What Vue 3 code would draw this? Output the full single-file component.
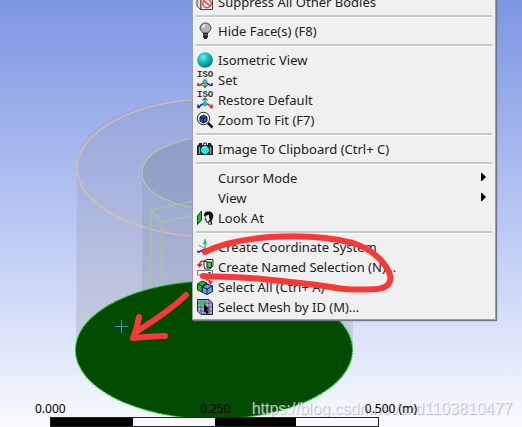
<template>
  <main class="viewport">
    <svg class="model" width="522" height="427" viewBox="0 0 522 427" aria-hidden="true">
      <defs>
        <linearGradient id="side" x1="0" y1="0" x2="0" y2="1">
          <stop offset="0" stop-color="#9298bc" stop-opacity="0.25" />
          <stop offset="1" stop-color="#9b9ba8" stop-opacity="0.35" />
        </linearGradient>
      </defs>
      <!-- outer and inner cylinders -->
      <path d="M77 167C77 126 130 99 214 99C298 99 353 126 353 167V350H76Z" fill="url(#side)" />
      <path d="M142 172C142 156 162 144 194 139V300H142Z" fill="#7d86a3" fill-opacity="0.22" />
      <path d="M142 172C142 190 162 203 194 208V139C162 144 142 156 142 172Z" fill="#78839f" fill-opacity="0.2" />
      <ellipse cx="215" cy="168" rx="138" ry="69" fill="none" stroke="#e3bd9e" stroke-width="1.2" />
      <ellipse cx="215" cy="173" rx="73" ry="36" fill="none" stroke="#a9cfa9" stroke-width="1.2" />
      <path d="M151 290V210L194 201M151 210L162 222L194 215M162 222L161 290" fill="none" stroke="#a5c99a" stroke-width="1.2" />
      <!-- selected bottom face -->
      <ellipse cx="214" cy="350" rx="138.500" ry="69" fill="#004b00" stroke="#18c818" stroke-width="1.2" stroke-dasharray="2 1" />
      <path d="M115 326.500H128M121.500 320V333" stroke="#5a87b8" stroke-width="1" />
    </svg>

    <p class="watermark">https://blog.csdn.net/sxd1103810477</p>
    <div class="scale">
      <div class="labels">
        <span>0.000</span>
        <span>0.250</span>
        <span>0.500 (m)</span>
      </div>
      <div class="ruler"><i></i><i></i><i></i><i></i></div>
    </div>

    <menu class="context">
      <template v-for="(group, g) in groups" :key="g">
        <li v-if="g" class="separator" role="separator"></li>
        <li v-for="item in group" :key="item.label">
          <button type="button" class="item">
            <svg class="icon" viewBox="0 0 16 16" aria-hidden="true" v-html="icons[item.icon]"></svg>
            <span>{{ item.label }}</span>
            <svg v-if="item.sub" class="arrow" viewBox="0 0 5 8" aria-hidden="true"><path d="M0 0H1L5 4L1 8H0Z" /></svg>
          </button>
        </li>
      </template>
    </menu>

    <!-- red pen marks -->
    <svg class="marks" width="522" height="427" viewBox="0 0 522 427" aria-hidden="true">
      <path d="M205 252C222 243 246 239 270 237C302 235 330 237 353 243C371 249 383 260 389 272C393 282 388 288 377 289C362 290 345 290 331 287C305 283 284 281 262 279C240 277 220 277 203 276" />
      <path d="M186 295C173 308 155 320 136 332M139 317C138 324 136 331 133 338C144 337 154 336 165 336" />
    </svg>
  </main>
</template>

<script setup>
const groups = [
  [{ label: "Suppress All Other Bodies", icon: "suppress" }],
  [{ label: "Hide Face(s) (F8)", icon: "bulb" }],
  [
    { label: "Isometric View", icon: "ball" },
    { label: "Set", icon: "isoSet" },
    { label: "Restore Default", icon: "isoRestore" },
    { label: "Zoom To Fit (F7)", icon: "zoom" },
  ],
  [{ label: "Image To Clipboard (Ctrl+ C)", icon: "camera" }],
  [
    { label: "Cursor Mode", sub: true },
    { label: "View", sub: true },
    { label: "Look At", icon: "look" },
  ],
  [
    { label: "Create Coordinate System", icon: "axes" },
    { label: "Create Named Selection (N)...", icon: "named" },
    { label: "Select All (Ctrl+ A)", icon: "cubes" },
    { label: "Select Mesh by ID (M)...", icon: "mesh" },
  ],
];

// lettering above the axis glyphs
const isoCap = '<text x="0" y="5" font-family="Liberation Mono, monospace" font-size="9" font-weight="bold" fill="#333">ISO</text>';

const icons = {
  suppress: '<path d="M0 0L4 3V16L0 12Z" fill="#ddd" stroke="#444"/><path d="M4 3H15.500V15.500H4Z" fill="#eee" stroke="#444"/><circle cx="10" cy="9.500" r="4.200" fill="#f3dada" stroke="#c55" stroke-width="1.400"/><path d="M7 7L13 12" stroke="#c55" stroke-width="1.500"/>',
  bulb: '<path d="M6 10C5.500 8.500 3 7.500 3 5A5.500 5 0 0 1 14 5C14 7.500 11.500 8.500 11 10Z" fill="#b4b4b4" stroke="#444"/><path d="M6 5C6 3 7 2 8.500 2" fill="none" stroke="#eee" stroke-width="1.500"/><path d="M6 10H11V14L9.500 16H7.500L6 14Z" fill="#222"/><path d="M6 12H11" stroke="#777"/>',
  ball: '<defs><radialGradient id="b" cx=".38" cy=".32" r=".7"><stop offset="0" stop-color="#6ff0ee"/><stop offset=".4" stop-color="#22c4c4"/><stop offset="1" stop-color="#077"/></radialGradient></defs><circle cx="8" cy="8" r="7.800" fill="url(#b)"/>',
  isoSet: isoCap + '<path d="M8 10L5 12L2 13.500M1 11V14" fill="none" stroke="#c22" stroke-width="1.600"/><path d="M8 10L11 12L14 13.500M15 11V14" fill="none" stroke="#22b" stroke-width="1.600"/><path d="M8 9V15M5.500 13L8 15.500L10.500 13" fill="none" stroke="#282" stroke-width="1.200"/><circle cx="8" cy="9.500" r="2.400" fill="#2ab5b5"/>',
  isoRestore: isoCap + '<path d="M8 11L4 13L2 15M1 12.500V15.500H3" fill="none" stroke="#22c" stroke-width="1.600"/><path d="M8 11L12 13L14 15M15 12.500V15.500H13" fill="none" stroke="#d22" stroke-width="1.600"/><path d="M8 12V6M5.500 8.500L8 6L10.500 8.500" fill="none" stroke="#282" stroke-width="1.200"/><circle cx="8" cy="12" r="2.400" fill="#2ab5b5"/>',
  zoom: '<circle cx="6.500" cy="6.500" r="6.200" fill="#f4f4fa" stroke="#222"/><path d="M3 5L6.500 3L10 5V9L6.500 11L3 9Z" fill="#2c56b8" stroke="#013"/><path d="M3 5L6.500 6.500L10 5M6.500 6.500V10.500" fill="none" stroke="#013"/><path d="M11 11L15.500 15.500" stroke="#111" stroke-width="2.500"/>',
  camera: '<path d="M0 5L2 3V2H5V4H11V2H14V3L16 5V14H0Z" fill="#222"/><path d="M2.500 6V13M13.500 6V13" stroke="#999" stroke-width="1.500"/><path d="M6 4L7 2H9L10 4" fill="#ddd" stroke="#222"/><circle cx="8" cy="9" r="4.500" fill="#2ee6e6" stroke="#044"/><path d="M6 8Q7 6 9 6" stroke="#cff" fill="none"/>',
  look: '<path d="M.5 6L4.500 1V10L.5 14.500Z" fill="#2b3" stroke="#141"/><path d="M7 6C6.500 3 9 1 12 1.500C15 1.500 17 4 16 8L14.500 11L15.500 14.500H11L11.500 12.500L9 12.500L8.500 10L7.500 9L8.500 7Z" fill="#111"/><path d="M9 5.500L12 5V8L13 9L11.500 11.500H9.500V9.500L8.500 8.500Z" fill="#eee"/><path d="M12 12L13.500 11.500L14 14H12Z" fill="#bbb"/>',
  axes: '<path d="M8 10V2M6.500 5L8 1L9.500 5" stroke="#3b5" fill="none" stroke-width="1.300"/><path d="M8 10L1 13.500M0 12L3 13.500" stroke="#33d" stroke-width="1.800"/><path d="M2 6L8 10" stroke="#58c" stroke-width="1"/><path d="M8 10L14 13" stroke="#d44" stroke-width="1.500"/>',
  named: '<path d="M7 2L10 .5H16V7L13 10H8L7 7Z" fill="#f4f4f4" stroke="#222"/><path d="M10 3H14.500V8.500H10Z" fill="#3c4" stroke="#131"/><path d="M7 2L10 3" stroke="#222"/><path d="M6.500 2C4 2 2.500 4 2.500 7M.5 5L2.500 7.500L5 5" fill="none" stroke="#c22" stroke-width="1.400"/><path d="M.5 11.500H15.500V16H.5Z" fill="#fff" stroke="#777"/><path d="M11 13H14L12.500 15Z" fill="#222"/>',
  cubes: '<path d="M.5 5L5 2L10 4V10L5 13L.5 11Z" fill="#2b3" stroke="#131"/><path d="M.5 5L5 7L10 4M5 7V13" fill="none" stroke="#131"/><path d="M5.500 8L10 5L15.500 7V12.500L10 15.500L5.500 13.500Z" fill="#6a9ae8" stroke="#124"/><path d="M5.500 8L10 10L15.500 7M10 10V15" fill="none" stroke="#124"/><path d="M9 1Q13 0 13.500 4M11.500 2.500L13.500 4.500L15.500 2" fill="none" stroke="#d22" stroke-width="1.300"/>',
  mesh: '<path d="M.5 .5H12L15.500 4V15.500H4L.5 12Z" fill="#a6a6d6" stroke="#223"/><path d="M.5 4H15M1 8H15M3 12H15M4 1V15M8 1V15M12 1V15" stroke="#446" stroke-width=".7" fill="none"/><path d="M2 2H7V6H2Z" fill="#1d3"/><path d="M7 5L12.500 10.500H10L11.500 14L9.500 15L8.500 12L7 13Z" fill="#000"/>',
};
</script>

<style scoped>
.viewport { position: relative; display: flex; flex-direction: column; justify-content: flex-end; height: 100vh; overflow: hidden; background: linear-gradient(#7c96e2, #b9c7f2 52%, #f8faff); font-family: "Noto Sans", sans-serif; color: #222; }
.model, .marks { position: absolute; top: 0; left: 0; }
.marks { pointer-events: none; fill: none; stroke: #fa3838; stroke-width: 6px; stroke-linecap: round; stroke-linejoin: round; }
.scale { position: relative; width: 329px; margin-left: 50px; }
.labels { display: flex; justify-content: space-between; margin: 0 -38px 0 -15px; font-size: 12px; line-height: 16px; color: #000; }
.ruler { display: grid; grid-template-columns: repeat(4, 1fr); height: 8px; border: 1px solid #222; }
.ruler i { background: #f8faff; }
.ruler i:nth-child(odd) { background: #000; }
.watermark { position: absolute; right: 10px; bottom: 8px; margin: 0; font: 16px/20px "Liberation Sans", sans-serif; color: rgba(255, 255, 255, 0.7); text-shadow: 1px 1px 1px rgba(120, 120, 130, 0.5); }
.context { position: absolute; top: -12px; left: 192px; box-sizing: border-box; width: 304px; margin: 0; padding: 3px 3px 2px; list-style: none; background: #f0f0f0; border: 1px solid #a0a0a0; box-shadow: 1px 1px 1px #6f7686; }
.item { display: flex; align-items: center; gap: 5px; width: 100%; height: 20px; padding: 0 6px 0 1px; border: 0; background: none; color: #222; font: 13px/20px "Noto Sans", sans-serif; text-align: left; }
.item span { flex: 1; white-space: nowrap; }
.icon { width: 16px; height: 16px; overflow: visible; }
.arrow { width: 5px; height: 8px; margin-bottom: 3px; fill: #000; }
.separator { height: 2px; margin: 3px 0; background: #c8c8c8; border-bottom: 1px solid #fff; }
</style>

<style>
body { margin: 0; }
</style>
